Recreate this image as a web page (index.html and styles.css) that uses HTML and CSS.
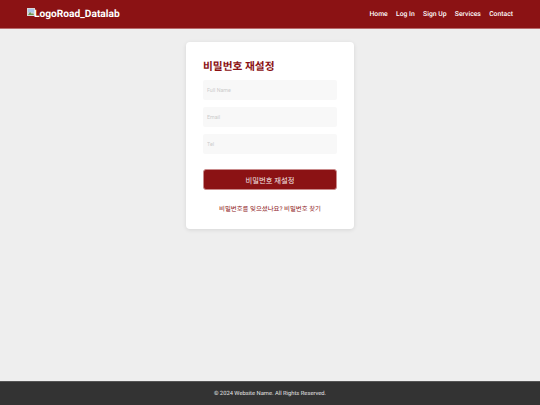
FILE: index.html
```html
<!DOCTYPE html>
<html lang="ko">
<head>
<meta charset="utf-8">
<title>비밀번호 재설정</title>
<link rel="stylesheet" href="styles.css">
</head>
<body>
<header class="topbar">
  <a class="logo" href="#">
    <svg class="logo-icon" viewBox="0 0 8 8" width="8" height="8" aria-hidden="true">
      <rect width="8" height="8" fill="#d8d8d8"/>
      <rect x="1" y="1" width="6" height="3.5" fill="#a9c4e8"/>
      <path d="M1 7 L3 4 L5 6 L6 5 L7 7 Z" fill="#6d9a55"/>
    </svg><span>LogoRoad_Datalab</span>
  </a>
  <nav class="nav">
    <a href="#">Home</a>
    <a href="#">Log In</a>
    <a href="#">Sign Up</a>
    <a href="#">Services</a>
    <a href="#">Contact</a>
  </nav>
</header>
<main class="main">
  <form class="card">
    <h2 class="title">비밀번호 재설정</h2>
    <input class="field" type="text" placeholder="Full Name">
    <input class="field" type="text" placeholder="Email">
    <input class="field" type="text" placeholder="Tel">
    <button class="submit" type="button">비밀번호 재설정</button>
    <a class="forgot" href="#">비밀번호를 잊으셨나요? 비밀번호 찾기</a>
  </form>
</main>
<footer class="footer">© 2024 Website Name. All Rights Reserved.</footer>
</body>
</html>
```
FILE: styles.css
```css
* { box-sizing: border-box; }
html, body { height: 100%; }
body {
  margin: 0;
  display: flex;
  flex-direction: column;
  min-height: 405px;
  height: 405px;
  overflow: hidden;
  background: #eeeeee;
  font-family: Roboto, "Noto Sans CJK KR", sans-serif;
  text-rendering: geometricPrecision;
}
.topbar {
  height: 29px;
  flex: none;
  display: flex;
  align-items: center;
  justify-content: space-between;
  padding: 0 27px;
  background: #8b1214;
  border-bottom: 1px solid #b86a6c;
}
.logo {
  display: flex;
  align-items: flex-start;
  height: 15px;
  color: #fff;
  font-size: 10.2px;
  line-height: 15px;
  font-weight: 700;
  text-decoration: none;
}
.logo-icon { flex: none; margin-top: 1px; margin-right: -1px; }
.nav { display: flex; gap: 8.3px; }
.nav a {
  color: #fff;
  font-size: 6.8px;
  font-weight: 500;
  text-decoration: none;
}
.main { flex: 1; display: flex; justify-content: center; align-items: flex-start; padding-top: 13px; }
.card {
  width: 168px;
  height: 187px;
  display: flex;
  flex-direction: column;
  padding: 17px 17px 0;
  background: #fff;
  border-radius: 4px;
  box-shadow: 0 1px 4px rgba(0, 0, 0, 0.1);
}
.title {
  margin: 0 0 6px;
  height: 15px;
  color: #8b1214;
  font-size: 10.7px;
  line-height: 16px;
  font-weight: 700;
}
.field {
  width: 100%;
  height: 20px;
  margin-bottom: 7px;
  padding: 0 4px;
  background: #f8f8f8;
  border: 0;
  border-radius: 2px;
  font-family: inherit;
  font-size: 5.3px;
  outline: none;
}
.field::placeholder { color: #cccccc; }
.submit {
  width: 100%;
  height: 21px;
  margin-top: 8px;
  background: #8b1214;
  color: #f4e6e6;
  border: 1px solid #c98a8b;
  border-radius: 3px;
  font-family: inherit;
  font-size: 7.3px;
}
.forgot {
  margin-top: 15px;
  text-align: center;
  color: #8b1214;
  font-size: 6.4px;
  line-height: 9px;
  text-decoration: none;
}
.footer {
  height: 24px;
  flex: none;
  display: flex;
  align-items: center;
  justify-content: center;
  background: #333333;
  border-top: 1px solid #555555;
  color: #e4e4e4;
  font-size: 5.8px;
}
```
